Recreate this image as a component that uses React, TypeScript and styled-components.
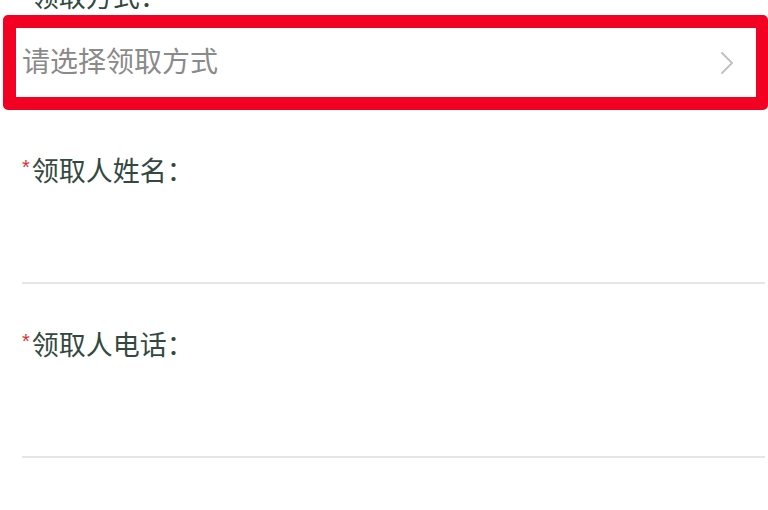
import React from "react";
import styled, { createGlobalStyle } from "styled-components";

const Global = createGlobalStyle`
  html, body { margin: 0; padding: 0; background: #ffffff; overflow: hidden; }
  body { font-family: "Noto Sans CJK SC", "Noto Sans", sans-serif; }
`;

const Page = styled.div`
  width: 768px;
  height: 510px;
  overflow: hidden;
  background: #ffffff;
`;

const Form = styled.div`
  display: flex;
  flex-direction: column;
  margin-top: -22px;
`;

const Field = styled.div<{ $after: number }>`
  display: flex;
  flex-direction: column;
  margin-bottom: ${(p) => p.$after}px;
`;

const Label = styled.div`
  display: flex;
  align-items: flex-start;
  padding-left: 22px;
  height: 36px;
  font-size: 27px;
  line-height: 36px;
  color: #33493f;
`;

const Star = styled.span`
  color: #d8322c;
  font-size: 20px;
  line-height: 20px;
  margin-top: 5px;
  margin-right: 2px;
  font-family: "Liberation Sans", sans-serif;
`;

const SelectRow = styled.div`
  box-sizing: border-box;
  margin: 1px 0 0 3px;
  height: 95px;
  border: 13px solid #f20123;
  border-right-width: 12px;
  border-radius: 5px;
  display: flex;
  align-items: center;
  justify-content: space-between;
  padding: 0 22px 6px 6px;
  background: #ffffff;
`;

const Placeholder = styled.span`
  font-size: 28px;
  color: #8a8a8a;
`;

const Chevron = styled.svg`
  width: 14px;
  height: 24px;
  margin-top: 6px;
`;

const InputArea = styled.div`
  height: 94px;
  margin: 0 3px 0 22px;
  border-bottom: 2px solid #e6e6e6;
`;

function FieldLabel({ text }: { text: string }) {
  return (
    <Label>
      <Star>*</Star>
      <span>{text}</span>
    </Label>
  );
}

export default function App() {
  return (
    <Page>
      <Global />
      <Form>
        <Field $after={42}>
          <FieldLabel text="领取方式：" />
          <SelectRow>
            <Placeholder>请选择领取方式</Placeholder>
            <Chevron viewBox="0 0 14 24" fill="none">
              <path d="M2 2 L12 12 L2 22" stroke="#c2c2c2" strokeWidth="2" strokeLinecap="round" strokeLinejoin="round" />
            </Chevron>
          </SelectRow>
        </Field>
        <Field $after={42}>
          <FieldLabel text="领取人姓名：" />
          <InputArea />
        </Field>
        <Field $after={0}>
          <FieldLabel text="领取人电话：" />
          <InputArea />
        </Field>
      </Form>
    </Page>
  );
}
